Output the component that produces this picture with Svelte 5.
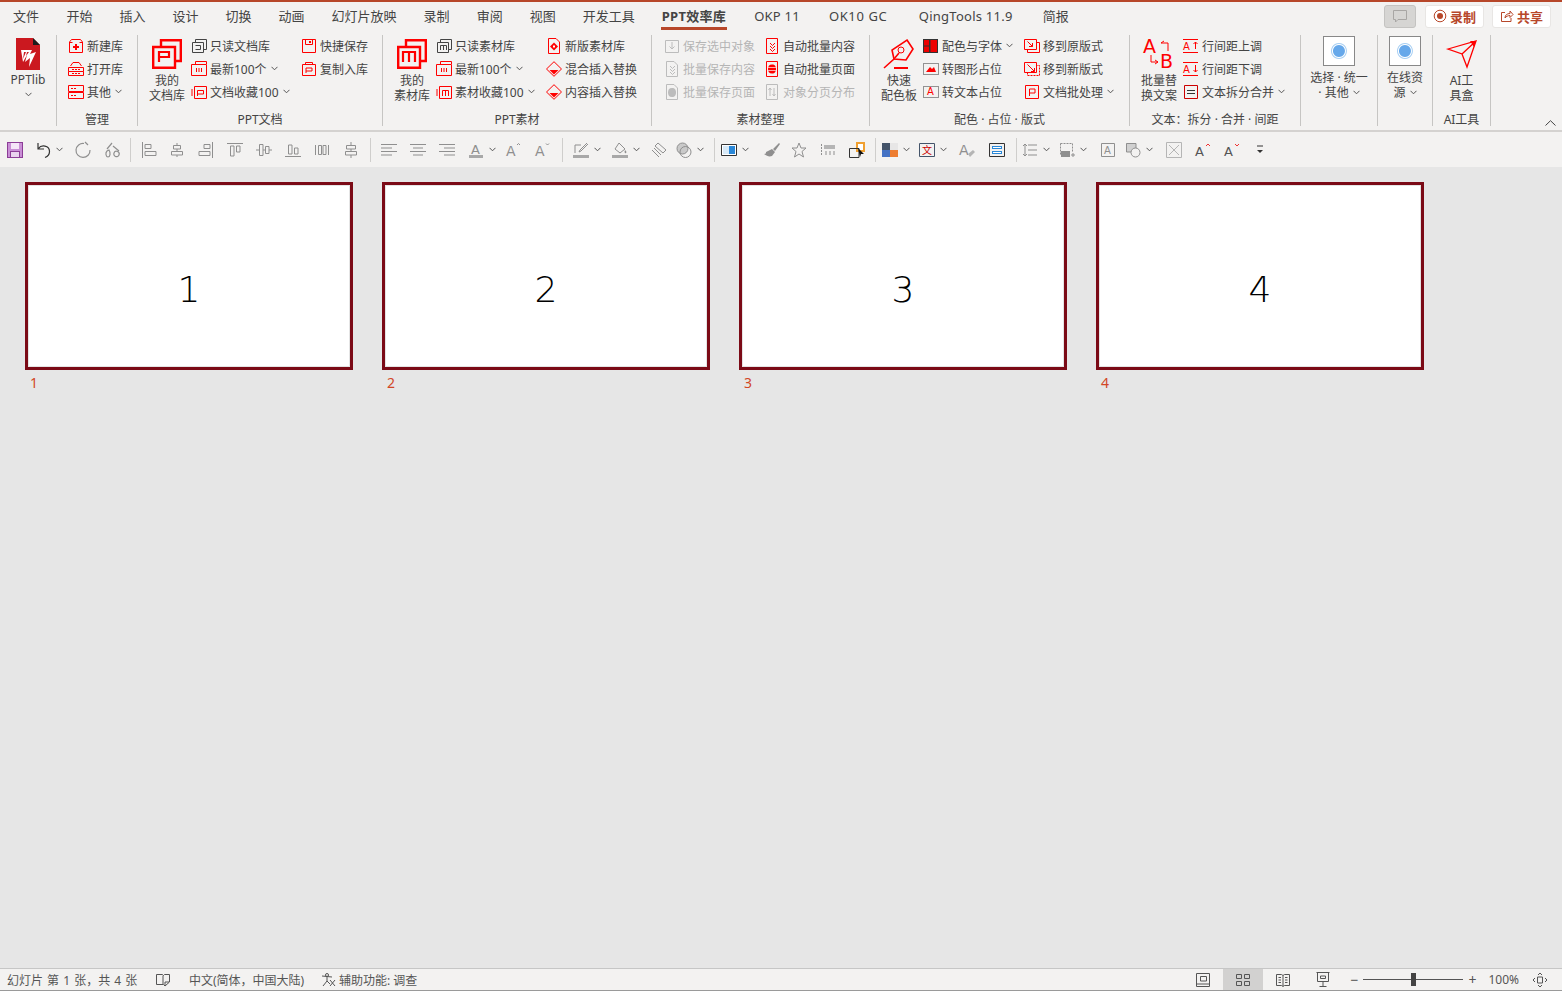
<script>
    const R = '#f00', D = '#444', Gy = '#bcbcbc', Q = '#8f8f8f', K = '#333';

    const s = (d, c = R, w = 1, dash = null) => ({ d, c, w, dash });
    const f = (d, c = R) => ({ d, fill: c });
    const t = (text, x, y, z, c = R, b = 400) => ({ text, x, y, z, c, b });

    const dots = 'M5 7h1v4H5zM7.5 7h1v4h-1zM10 7h1v4h-1z';
    const chev = 'M6 5 8.5 7.5 11 5M6 8 8.5 10.5 11 8M6 11 8.5 13.5 11 11';

    const icons = {
        new: [s('M1.5 4 3.5 1.5H12.5L14.5 4V14.5H1.5Z'), s('M1.5 4.5H4.5M11.5 4.5H14.5'), f('M7 6H9V8H11V10H9V12H7V10H5V8H7Z')],
        open: [s('M2.5 5 5 1.5H11L13.5 5'), s('M.5 6.5H15.5V10.5H.5ZM.5 10.5V14.5H15.5V10.5'), s('M4 8.5H12M4 12.5H12', R, 1, '2 1')],
        other: [s('M.5 1.5H15.5V7.5H.5ZM.5 8.5H15.5V14.5H.5Z'), s('M3 4.5H9M3 11.5H9', R, 1, '2 1')],
        readDoc: [s('M4.5 4V1.5H15.5V11.5H12.5', D), s('M1.5 4.5H12.5V14.5H1.5Z', D), s('M4.5 7.5H9.5V11.5H4.5', D)],
        readMat: [s('M4.5 4V1.5H15.5V11.5H12.5', D), s('M1.5 4.5H12.5V14.5H1.5Z', D), s('M4.5 12V7.5H10.5V12M7.5 7.5V12', D)],
        recent: [s('M4.5 3V.5H15.5V3'), s('M.5 3.5H15.5V14.5H.5Z'), f(dots)],
        favDoc: [s('M3.5 2.5H15.5V14.5H3.5Z'), s('M1 5V12'), s('M6.5 12V6.5H12.5V10H6.5')],
        favMat: [s('M3.5 2.5H15.5V14.5H3.5Z'), s('M1 5V12'), s('M6.5 12V6.5H12.5V12M9.5 6.5V12')],
        quickSave: [s('M1.5 1.5H14.5V14.5H1.5Z'), s('M4.5 2V6.5H11.5V2'), f('M8 3h2v2H8z')],
        copyIn: [s('M1.5 3.5H14.5V14.5H1.5ZM4.5 3V1.5H11.5V3'), s('M5 12V7H11V10H5')],
        newMat: [s('M2.5 .5H10L13.5 4V15.5H2.5Z'), f('M8 4.5 12 8.5 8 12.5 4 8.5Z'), f('M7 7.5h2v2H7z', '#fff')],
        mix: [s('M8 .7 15.5 8 8 15.3.5 8Z'), f('M3.500 9H12.500L8 13.500Z')],
        saveSel: [s('M1.5 2.5H14.5V14.5H1.5Z', Gy), s('M8 4V11M5.5 8.5 8 11 10.5 8.5', Gy)],
        batchSave: [s('M2.5 .5H10L13.5 4V15.5H2.5Z', Gy), s(chev, Gy)],
        batchPage: [s('M2.5 .5H10L13.5 4V15.5H2.5Z', Gy), f('M8 4C11 4 12 6 12 8.5S11 13 8 13 4 11 4 8.5 5 4 8 4Z', Gy)],
        distPage: [s('M2.5 .5H13.5V15.5H2.5Z', Gy), s('M6 4V12M10 4V12M4.5 6 6 4 7.5 6M8.5 10 10 12 11.5 10', Gy)],
        autoContent: [s('M2.5 .5H13.5V15.5H2.5Z'), s(chev)],
        autoPage: [s('M2.5 .5H13.5V15.5H2.5Z'), f('M8 3.5C11 3.5 12 5.5 12 8S11 12.5 8 12.5 4 10.5 4 8 5 3.5 8 3.5Z'), s('M4 6.5H12M4 9.5H12', '#faa')],
        colorFont: [f('M0 1H15V15H0Z', K), f('M1 2H6V7.500H1ZM1 8.500H6V14H1ZM7.500 2H14V14H7.500Z', '#e00')],
        toShape: [s('M.5 2.5H15.5V13.5H.5Z', K, 1, '1 1'), f('M3 11 7 6 9 8 11 6 13 11Z')],
        toText: [s('M.5 2.5H15.5V13.5H.5Z', K, 1, '1 1'), t('A', 4, 11, 10)],
        oldLayout: [s('M.5 1.5H12.5V11.5H.5Z'), s('M3.5 11.5V14.5H15.5V4.5H12.5'), s('M3.5 3.5 8.5 8.5M8.5 5V8.5H5')],
        newLayout: [s('M.5 1.5H12.5V11.5H.5Z'), s('M3.5 11.5V14.5H15.5V4.5H12.5', R, 1, '2 1'), s('M3.5 3.5 10.5 10.5M10.5 7V10.5H7')],
        docBatch: [s('M1.5 1.5H14.5V14.5H1.5Z'), s('M5.5 12V5H11V9H5.5')],
        lineUp: [s('M0 1.5H15M0 14.5H15'), t('A', 0, 12, 10), s('M12.5 11V4M10.5 6 12.5 4 14.5 6')],
        lineDown: [s('M0 1.5H15M0 14.5H15'), t('A', 0, 12, 10), s('M12.5 4V11M10.5 9 12.5 11 14.5 9')],
        split: [s('M1.5 1.5H14.5V14.5H1.5Z', '#c00'), s('M4 6.5H12M4 9.5H12', K)],

        save: [f('M0 0H16V16H0Z', '#8c3d97'), f('M1 1H15V15H1Z', '#c98fd6'), f('M4 1H12V7H4Z', '#f5e6f8'), f('M3 9H13V15H3Z', '#8c3d97'), f('M4 10H12V15H4Z', '#e9d3ee')],
        undo: [s('M3 1V7H9M3.5 6.5C6 2.500 14.500 3 14.500 9.500 14.500 12 12.500 14.500 10 15.500', K, 1.2)],
        redo: [s('M15 8A7 7 0 1 1 9 1.500M10 0 13 3', Q, 1.2)],
        repeat: [s('M3 9C1 11 2 15 4 15S7 11 5 8ZM9 4 15 9M10 11A2.500 2.500 0 1 0 15 13 2.500 2.500 0 0 0 10 11ZM3 7 8 1', Q, 1.2)],
        alL: [s('M1.500 0V16M4 2.500H10V6.500H4ZM4 9.500H15V13.500H4Z', Q)],
        alC: [s('M8 1V3M8 7V9M8 13V15M4.500 3.500H11.500V7H4.500ZM2.500 9.500H13.500V13H2.500Z', Q)],
        alR: [s('M14.500 0V16M6 2.500H12V6.500H6ZM1 9.500H12V13.500H1Z', Q)],
        alT: [s('M0 1.500H16M3.500 4V14H7V4ZM9.500 4V10H13V4Z', Q)],
        alM: [s('M0 8H3M7 8H9M13 8H16M3.500 2.500H7V13.500H3.500ZM9.500 4.500H13V11.500H9.500Z', Q)],
        alB: [s('M0 14.500H16M3.500 12V3H7V12ZM9.500 12V6H13V12Z', Q)],
        dH: [s('M1.500 3V13M14.500 3V13M4.500 3.500H7.500V12.500H4.500ZM9 3.500H12V12.500H9Z', Q)],
        dV: [s('M8 0V3M8 7V9M8 13V16M3.500 3.500H12.500V7H3.500ZM2.500 9.500H13.500V13H2.500Z', Q)],
        tL: [s('M0 2.500H16M0 6H11M0 9.500H16M0 13H11', Q)],
        tC: [s('M0 2.500H16M3 6H13M0 9.500H16M3 13H13', Q)],
        tR: [s('M0 2.500H16M5 6H16M0 9.500H16M5 13H16', Q)],
        fontColor: [t('A', 3, 12, 13, Q), f('M1 13H15V16H1Z', '#a8a8a8')],
        fontUp: [t('A', 0, 14, 14, Q), s('M11 3 12.500 1.500 14 3', Q)],
        fontDown: [t('A', 0, 14, 14, Q), s('M11 1.500 12.500 3 14 1.500', Q)],
        pen: [s('M2 11V3H8M14 1 7 8 6 10 8 9 15 2', Q), f('M0 13H16V16H0Z', '#a8a8a8')],
        fill: [s('M7 1 13 7 8 11 3 7Z', Q), f('M13 8C14 9 15 10 14 11S12 10 13 8Z', Q), f('M0 13H16V16H0Z', '#a8a8a8')],
        eraser: [s('M7 1 15 8 12 11 4 4ZM1 8 8 15M3 6 10 13', Q)],
        merge: [f('M1 6.500A5.500 5.500 0 1 0 12 6.500 5.500 5.500 0 1 0 1 6.500Z', '#c9c9c9'), s('M1 6.500A5.500 5.500 0 1 0 12 6.500 5.500 5.500 0 1 0 1 6.500Z', Q), s('M4 10A5.500 5.500 0 1 0 15 10 5.500 5.500 0 1 0 4 10Z', Q)],
        picker: [s('M.5 2.500H15.500V13.500H.5Z', K), f('M1 3H15V13H1Z', '#fff'), f('M8 4H14V12H8Z', '#2a88d8'), f('M2 4H8V12H2Z', '#d8eaf8')],
        brush: [f('M9 7 15 1 16 2 11 9ZM2 10 8 7 11 10 8 14C5 15 3 14 0 12 2 12 2 11 2 10Z', Q)],
        star: [s('M8 1 10 6H15L11 9.500 12.500 15 8 12 3.500 15 5 9.500 1 6H6Z', Q)],
        guides: [s('M1.500 2V14', Q, 1, '2 1'), f('M4 3H15V7H4Z', '#b5b5b5'), s('M6 9V13M10 9V13M14 9V13', Q)],
        pick: [f('M7 0H16V10H7Z', '#f0a030'), f('M9 2H14V8H9Z', '#fff'), s('M.5 6.500H10V15.500H.5Z', K), f('M9 6 15 12 12 12 11 15Z', '#111')],
        theme: [f('M0 1H8V8H0Z', '#44546a'), f('M8 1H16V8H8Z', '#e7e6e6'), f('M0 8H8V15H0Z', '#4472c4'), f('M8 8H16V15H8Z', '#ed7d31')],
        wen: [s('M.5 1.500H15.500V14.500H.5Z', '#44546a'), t('文', 3, 12, 10, '#c00')],
        fontBrush: [t('A', 0, 13, 14, Q), f('M9 12 14 8 16 10 11 15Z', '#b5b5b5')],
        frame: [s('M.5 1.500H15.500V14.500H.5Z', K), f('M3 4H13V7H3ZM3 9H13V12H3Z', '#2a88d8'), f('M4 5H12V6H4ZM4 10H12V11H4Z', '#fff')],
        lineH: [s('M6 3H15M6 8H15M6 13H15M3 2V14M1 4 3 2 5 4M1 12 3 14 5 12', Q)],
        shot: [s('M1.500 1.500H13.500V10M1.500 1.500V13', Q, 1, '2 1'), f('M2 9H11V15H2Z', Q), s('M14 11V15M12 13H16', Q)],
        textbox: [s('M1.500 1.500H14.500V14.500H1.500Z', Q), t('A', 4, 12, 10, Q)],
        shapes: [f('M1 1H11V10H1Z', '#d0d0d0'), s('M1.500 1.500H11V10H1.500Z', Q), f('M6 10.500A4.500 4.500 0 1 0 15 10.500 4.500 4.500 0 1 0 6 10.500Z', '#f3f2f1'), s('M6 10.500A4.500 4.500 0 1 0 15 10.500 4.500 4.500 0 1 0 6 10.500Z', Q)],
        cross: [s('M.5 .5H15.500V15.500H.5ZM3 3 13 13M13 3 3 13', '#b5b5b5')],
        aUp: [t('A', 0, 14, 13, '#555'), s('M11 4 13 2 15 4', '#e33')],
        aDown: [t('A', 0, 14, 13, '#555'), s('M11 2 13 4 15 2', '#e33')],
        more: [s('M5 4H11', K), f('M5 8H11L8 11Z', K)],
    };

    const large = {
        pptlib: { vb: '0 0 26 32', w: 26, h: 32, p: [f('M1 0H18L25 7V32H1Z', '#cb181f'), f('M18 0 25 7H18Z', '#1c1c1c'), f('M6 12H17L15 16 21 14 14 29 15 20 10 24 12 17 8 24Z', '#fff'), f('M9 14 8 21 11 14ZM12 14 11 18 14 14Z', '#cb181f')] },
        myDoc: { vb: '0 0 30 30', w: 30, h: 30, p: [s('M9 7V1.200H28.800V22H23', R, 2.4), s('M1.200 8H23V28.800H1.200Z', R, 2.4), s('M7 23V13H17V18H7', R, 2.2)] },
        myMat: { vb: '0 0 30 30', w: 30, h: 30, p: [s('M9 7V1.200H28.800V22H23', R, 2.4), s('M1.200 8H23V28.800H1.200Z', R, 2.4), s('M6 23V13H18V23M12 13V23', R, 2.2)] },
        feather: { vb: '0 0 32 30', w: 32, h: 30, p: [s('M24 1 30 10 23 21 11 20 9 11Z', R, 1.6), s('M1 29 11 20 16 14', R, 1.6), s('M18 8A3 3 0 1 1 18 14 3 3 0 1 1 18 8Z', R, 1), s('M11 29H25', R, 2)] },
        ab: { vb: '0 0 32 34', w: 32, h: 34, p: [t('A', 0, 16, 19), t('B', 17, 31, 19), s('M21 4 18 6H25V14M8 18V25H15M12 23 15 25 12 27', R, 1)] },
        send: { vb: '0 0 30 30', w: 30, h: 30, p: [s('M1 10 29 2 20 28 15 15ZM15 15 29 2', R, 1.3), f('M23 2 29 2 27 8Z')] },
        blue: { vb: '0 0 32 30', w: 32, h: 30, p: [f('M0 0H32V30H0Z', '#888'), f('M1 1H31V29H1Z', '#fff'), f('M16 7A8 8 0 1 1 15.900 7Z', '#a9d0f3'), f('M16 8A7 7 0 1 1 15.900 8Z', '#fff'), f('M16 9A6 6 0 1 1 15.900 9Z', '#66a8ea')] },
    };

    const tabs = ['文件', '开始', '插入', '设计', '切换', '动画', '幻灯片放映', '录制', '审阅', '视图', '开发工具', 'PPT效率库', 'OKP 11', 'OK10 GC', 'QingTools 11.9', '简报'];

    const row = (icon, text, more = false, off = false) => ({ icon, text, more, off });

    const groups = [
        { cls: 'g1', big: { icon: 'pptlib', lines: ['PPTlib'], more: true }, cols: [], label: '' },
        { cls: 'g2', cols: [[row('new', '新建库'), row('open', '打开库'), row('other', '其他', true)]], label: '管理' },
        {
            cls: 'g3', big: { icon: 'myDoc', lines: ['我的', '文档库'] },
            cols: [[row('readDoc', '只读文档库'), row('recent', '最新100个', true), row('favDoc', '文档收藏100', true)], [row('quickSave', '快捷保存'), row('copyIn', '复制入库')]],
            label: 'PPT文档'
        },
        {
            cls: 'g4', big: { icon: 'myMat', lines: ['我的', '素材库'] },
            cols: [[row('readMat', '只读素材库'), row('recent', '最新100个', true), row('favMat', '素材收藏100', true)], [row('newMat', '新版素材库'), row('mix', '混合插入替换'), row('mix', '内容插入替换')]],
            label: 'PPT素材'
        },
        {
            cls: 'g5',
            cols: [[row('saveSel', '保存选中对象', false, true), row('batchSave', '批量保存内容', false, true), row('batchPage', '批量保存页面', false, true)], [row('autoContent', '自动批量内容'), row('autoPage', '自动批量页面'), row('distPage', '对象分页分布', false, true)]],
            label: '素材整理'
        },
        {
            cls: 'g6', big: { icon: 'feather', lines: ['快速', '配色板'] },
            cols: [[row('colorFont', '配色与字体', true), row('toShape', '转图形占位'), row('toText', '转文本占位')], [row('oldLayout', '移到原版式'), row('newLayout', '移到新版式'), row('docBatch', '文档批处理', true)]],
            label: '配色 · 占位 · 版式'
        },
        {
            cls: 'g7', big: { icon: 'ab', lines: ['批量替', '换文案'] },
            cols: [[row('lineUp', '行间距上调'), row('lineDown', '行间距下调'), row('split', '文本拆分合并', true)]],
            label: '文本：拆分 · 合并 · 间距'
        },
        { cls: 'g8', big: { icon: 'blue', lines: ['选择 · 统一', '· 其他'], more: 'inline', high: true }, cols: [], label: '' },
        { cls: 'g9', big: { icon: 'blue', lines: ['在线资', '源'], more: 'inline', high: true }, cols: [], label: '' },
        { cls: 'g10', big: { icon: 'send', lines: ['AI工', '具盒'] }, cols: [], label: 'AI工具' },
    ];

    // [icon, has caret, distance to the next item]; separators only carry the distance
    const quick = [
        ['save', 0, 28], ['undo', 1, 40], ['redo', 0, 29], ['repeat', 0, 26], ['|', 0, 11],
        ['alL', 0, 28], ['alC', 0, 29], ['alR', 0, 29], ['alT', 0, 29], ['alM', 0, 29], ['alB', 0, 29], ['dH', 0, 29], ['dV', 0, 27], ['|', 0, 11],
        ['tL', 0, 29], ['tC', 0, 29], ['tR', 0, 29], ['fontColor', 1, 38], ['fontUp', 0, 29], ['fontDown', 0, 27], ['|', 0, 11],
        ['pen', 1, 39], ['fill', 1, 39], ['eraser', 0, 25], ['merge', 1, 38], ['|', 0, 7],
        ['picker', 1, 43], ['brush', 0, 27], ['star', 0, 29], ['guides', 0, 29], ['pick', 0, 26], ['|', 0, 7],
        ['theme', 1, 37], ['wen', 1, 40], ['fontBrush', 0, 30], ['frame', 0, 27], ['|', 0, 6],
        ['lineH', 1, 37], ['shot', 1, 41], ['textbox', 0, 25], ['shapes', 1, 41], ['cross', 0, 29], ['aUp', 0, 29], ['aDown', 0, 28], ['more', 0, 16],
    ];

    const slides = [1, 2, 3, 4];
</script>

{#snippet art(parts, vb, w, h)}
    <svg viewBox={vb} width={w} height={h} class="icon">
        {#each parts as p}
            {#if p.text}
                <text x={p.x} y={p.y} font-size={p.z} fill={p.c} font-weight={p.b} class="glyph">{p.text}</text>
            {:else if p.fill}
                <path d={p.d} fill={p.fill} />
            {:else}
                <path d={p.d} fill="none" stroke={p.c} stroke-width={p.w} stroke-dasharray={p.dash} />
            {/if}
        {/each}
    </svg>
{/snippet}

{#snippet caret()}
    <svg class="caret" width="7" height="5" viewBox="0 0 7 5"><path d="M.5 .8 3.500 3.800 6.500 .8" fill="none" stroke="currentColor" /></svg>
{/snippet}

<div class="app">
    <header class="tabs">
        {#each tabs as tab}
            <span class="tab" class:active={tab === 'PPT效率库'} class:latin={/^[A-Z]/.test(tab) && tab !== 'PPT效率库'} class:gc={tab === 'OK10 GC'} class:qing={tab.startsWith('Qing')}>{tab}</span>
        {/each}
        <div class="actions">
            <button class="comment" aria-label="批注">
                <svg width="16" height="16" viewBox="0 0 16 16"><path d="M1.500 2.500H14.500V11.500H6L3.500 14V11.500H1.500Z" fill="none" stroke="#a8a6a4" /></svg>
            </button>
            <button class="act">
                <svg width="14" height="14" viewBox="0 0 14 14"><circle cx="7" cy="7" r="5.800" fill="none" stroke="#b7472a" /><circle cx="7" cy="7" r="3" fill="#b7472a" /></svg>
                录制
            </button>
            <button class="act">
                <svg width="14" height="14" viewBox="0 0 14 14"><path d="M5 3.500H1.500V12.500H11V9M5 9C5 6 7 4.500 10 4.500V2L13 5.500 10 8.500V6.500C8 6.500 6 7.500 5 9Z" fill="none" stroke="#b7472a" /></svg>
                共享
            </button>
        </div>
    </header>

    <section class="ribbon">
        {#each groups as g}
            <div class="group {g.cls}">
                <div class="cols">
                    {#if g.big}
                        {@const a = large[g.big.icon]}
                        <div class="big" class:high={g.big.high}>
                            <div class="bigicon">
                                {@render art(a.p, a.vb, a.w, a.h)}
                            </div>
                            {#each g.big.lines as line, i}
                                <span class="line">{line}{#if g.big.more === 'inline' && i === g.big.lines.length - 1}{@render caret()}{/if}</span>
                            {/each}
                            {#if g.big.more === true}
                                <span class="line">{@render caret()}</span>
                            {/if}
                        </div>
                    {/if}
                    {#each g.cols as col}
                        <div class="col">
                            {#each col as r}
                                <div class="row" class:off={r.off}>
                                    {@render art(icons[r.icon], '0 0 16 16', 16, 16)}
                                    <span>{r.text}</span>
                                    {#if r.more}{@render caret()}{/if}
                                </div>
                            {/each}
                        </div>
                    {/each}
                </div>
                <div class="label">{g.label}</div>
            </div>
        {/each}
        <svg class="collapse" width="11" height="6" viewBox="0 0 11 6"><path d="M.5 5.500 5.500 .7 10.500 5.500" fill="none" stroke="#444" /></svg>
    </section>

    <nav class="quick">
        {#each quick as q}
            {#if q[0] === '|'}
                <i class="sep" style:width="{q[2]}px"></i>
            {:else}
                <span class="q" style:width="{q[2]}px">
                    {@render art(icons[q[0]], '0 0 16 16', 16, 16)}
                    {#if q[1]}{@render caret()}{/if}
                </span>
            {/if}
        {/each}
    </nav>

    <main class="sorter">
        {#each slides as n}
            <div class="item">
                <div class="slide"><span>{n}</span></div>
                <div class="num">{n}</div>
            </div>
        {/each}
    </main>

    <footer class="status">
        <span class="st first">幻灯片 第 1 张，共 4 张</span>
        <svg class="book" width="16" height="14" viewBox="0 0 16 14"><path d="M1.500 1.500H7.500L8.500 2.500 9.500 1.500H14.500V9L10 13 8.500 11.500H1.500ZM8 2.500V11M10 13V9H14" fill="none" stroke="#555" /></svg>
        <span class="st lang">中文(简体，中国大陆)</span>
        <svg class="person" width="15" height="15" viewBox="0 0 15 15"><path d="M6 1.500A1.500 1.500 0 1 1 6 4.500 1.500 1.500 0 1 1 6 1.500ZM1 4 11 5M6 5V9L2 14M6 9 9 12M9 8 14 14M14 8 9 14" fill="none" stroke="#555" /></svg>
        <span class="st">辅助功能: 调查</span>
        <div class="right">
            <div class="view"><svg width="16" height="14" viewBox="0 0 16 14"><path d="M1.500 .5H14.500V13.500H1.500ZM1.500 11H14.500M5.500 3.500H11.500V8H5.500Z" fill="none" stroke="#555" /></svg></div>
            <div class="view on"><svg width="16" height="14" viewBox="0 0 16 14"><path d="M1.500 1.500H6.500V5.500H1.500ZM9.500 1.500H14.500V5.500H9.500ZM1.500 8.500H6.500V12.500H1.500ZM9.500 8.500H14.500V12.500H9.500Z" fill="none" stroke="#555" /></svg></div>
            <div class="view"><svg width="16" height="14" viewBox="0 0 16 14"><path d="M1.500 1.500H6.500L8 2.500 9.500 1.500H14.500V12.500H9.500L8 13.500 6.500 12.500H1.500ZM8 2.500V13M3.500 4.500H6M3.500 7H6M3.500 9.500H6M10 4.500H12.500M10 7H12.500M10 9.500H12.500" fill="none" stroke="#555" /></svg></div>
            <div class="view"><svg width="16" height="15" viewBox="0 0 16 15"><path d="M1.500 .5H14.500M2.500 .5V9.500H13.500V.5M8 9.500V14.500M4.500 14.500H11.500M5.500 4H10.500V6.500H5.500Z" fill="none" stroke="#555" /></svg></div>
            <div class="zoom">
                <span class="pm">−</span>
                <div class="track"><i></i></div>
                <span class="pm">+</span>
                <span class="pct">100%</span>
                <svg width="16" height="16" viewBox="0 0 16 16"><path d="M5.500 5H10.500V11H5.500ZM6 3 8 1 10 3M6 13 8 15 10 13M3 6 1 8 3 10M13 6 15 8 13 10" fill="none" stroke="#555" /></svg>
            </div>
        </div>
    </footer>
</div>

<style>
    :global(body) {
        margin: 0;
        background: #e6e6e6;
    }

    .app {
        height: 991px;
        width: 1562px;
        display: flex;
        flex-direction: column;
        overflow: hidden;
        font-family: "Noto Sans", "Noto Sans CJK SC", sans-serif;
        font-size: 12px;
        color: #444;
    }

    .tabs {
        height: 28px;
        flex: none;
        display: flex;
        align-items: center;
        border-top: 2px solid #b7472a;
        background: #f3f2f1;
    }

    .tab {
        position: relative;
        padding: 0 13.5px;
        font-size: 13px;
        line-height: 26px;
        white-space: nowrap;
    }

    .tab:first-child {
        padding-left: 13px;
        padding-right: 14px;
    }

    .tab.active {
        font-weight: 700;
        letter-spacing: .3px;
    }

    .tab.latin {
        letter-spacing: .25px;
        padding: 0 14.5px;
    }

    .tab.gc {
        letter-spacing: .6px;
        padding-right: 17px;
    }

    .tab.qing {
        padding-right: 16.5px;
    }

    .tab.active::after {
        content: '';
        position: absolute;
        left: 13px;
        right: 13px;
        bottom: -1px;
        height: 3px;
        background: #b7472a;
    }

    .actions {
        margin-left: auto;
        margin-right: 11px;
        display: flex;
        gap: 8px;
    }

    button {
        height: 23px;
        border-radius: 3px;
        border: 1px solid #e8e6e4;
        background: #fff;
        padding: 0;
        display: flex;
        align-items: center;
        justify-content: center;
        gap: 3px;
        font: inherit;
        font-size: 13px;
        font-weight: 700;
        color: #b7472a;
    }

    .act {
        width: 59px;
    }

    .comment {
        width: 32px;
        margin-right: 1px;
        background: #d6d5d3;
        border-color: #c4c3c1;
    }

    .ribbon {
        position: relative;
        height: 95px;
        flex: none;
        display: flex;
        padding-top: 5px;
        background: #f3f2f1;
        border-bottom: 2px solid #d4d2d0;
    }

    .group {
        height: 91px;
        box-sizing: border-box;
        border-right: 1px solid #c6c5c3;
        display: flex;
        flex-direction: column;
        flex: none;
    }

    .cols {
        height: 77px;
        flex: none;
        display: flex;
        align-items: flex-start;
    }

    .label {
        text-align: center;
        line-height: 15px;
        white-space: nowrap;
    }

    .g1 { width: 57px; }
    .g2 { width: 81px; }
    .g3 { width: 245px; }
    .g4 { width: 269px; }
    .g5 { width: 218px; }
    .g6 { width: 260px; }
    .g7 { width: 171px; }
    .g8 { width: 77px; }
    .g9 { width: 55px; }
    .g10 { width: 58px; }

    .g2 .cols { padding-left: 11px; }
    .g3 .cols, .g4 .cols, .g6 .cols, .g7 .cols { padding-left: 7px; }
    .g5 .cols { padding-left: 12px; }

    .g3 .col:nth-child(2) { width: 110px; }
    .g4 .col:nth-child(2) { width: 110px; }
    .g5 .col:nth-child(1) { width: 100px; }
    .g6 .col:nth-child(2) { width: 101px; }
    .g3 .col:nth-child(2), .g4 .col:nth-child(2), .g6 .col:nth-child(2), .g7 .col { margin-left: 2px; }

    .big {
        width: 44px;
        flex: none;
        display: flex;
        flex-direction: column;
        align-items: center;
    }

    .g1 .big, .g8 .big, .g9 .big, .g10 .big {
        width: 100%;
    }

    .bigicon {
        height: 38px;
        display: flex;
        align-items: center;
        justify-content: center;
    }

    .g1 .bigicon {
        height: 37px;
    }

    .big.high .bigicon {
        height: 35px;
        align-items: flex-start;
    }

    .big.high .icon {
        margin-top: 1px;
    }

    .line {
        min-height: 15px;
        line-height: 15px;
        white-space: nowrap;
        display: flex;
        align-items: center;
        gap: 3px;
    }

    .col {
        flex: none;
        margin-top: -1px;
    }

    .row {
        height: 23px;
        display: flex;
        align-items: center;
        gap: 3px;
        white-space: nowrap;
    }

    .row.off {
        color: #b5b5b5;
    }

    .icon {
        flex: none;
        display: block;
        overflow: visible;
    }

    .glyph {
        font-family: "DejaVu Sans", "Noto Sans CJK SC", sans-serif;
    }

    .caret {
        margin-left: 1px;
        color: #555;
        flex: none;
    }

    .collapse {
        position: absolute;
        right: 6px;
        bottom: 4px;
    }

    .quick {
        height: 35px;
        flex: none;
        display: flex;
        align-items: center;
        background: #f3f2f1;
        padding-left: 7px;
        box-sizing: border-box;
    }

    .q {
        flex: none;
        display: flex;
        align-items: center;
    }

    .q .caret {
        margin-left: 5px;
    }

    .sep {
        height: 24px;
        flex: none;
        box-sizing: border-box;
        border-left: 1px solid #cfcecc;
    }

    .sorter {
        flex: 1;
        display: flex;
        gap: 29px;
        align-items: flex-start;
        padding: 15px 0 0 25px;
        background: #e6e6e6;
    }

    .slide {
        width: 328px;
        height: 188px;
        box-sizing: border-box;
        border: 3px solid #7b0a16;
        background: #fff;
        box-shadow: inset 0 0 0 1px #e4e4e4;
        display: flex;
        align-items: center;
        justify-content: center;
        padding-top: 26px;
        font-family: "DejaVu Sans", sans-serif;
        font-weight: 200;
        font-size: 36px;
        color: #000;
    }

    .num {
        padding-left: 5px;
        font-size: 14px;
        line-height: 26px;
        color: #d24726;
    }

    .status {
        height: 23px;
        flex: none;
        box-sizing: border-box;
        display: flex;
        align-items: center;
        background: #f3f2f1;
        border-top: 1px solid #c6c6c6;
        border-bottom: 1px solid #9a9a9a;
        padding-left: 7px;
        color: #555;
    }

    .st {
        white-space: nowrap;
    }

    .first {
        width: 148px;
        word-spacing: 1px;
    }

    .book {
        margin-right: 18px;
        flex: none;
    }

    .lang {
        width: 132px;
    }

    .person {
        margin-right: 3px;
        flex: none;
    }

    .right {
        margin-left: auto;
        height: 100%;
        display: flex;
        align-items: center;
    }

    .view {
        width: 40px;
        height: 100%;
        display: flex;
        align-items: center;
        justify-content: center;
    }

    .view.on {
        background: #d2d1d0;
    }

    .zoom {
        display: flex;
        align-items: center;
        padding-left: 4px;
        padding-right: 14px;
    }

    .pm {
        width: 14px;
        text-align: center;
        font-size: 14px;
    }

    .track {
        position: relative;
        width: 100px;
        height: 1px;
        background: #555;
        margin: 0 2px;
    }

    .track i {
        position: absolute;
        left: 48px;
        top: -6px;
        width: 5px;
        height: 13px;
        background: #444;
    }

    .pct {
        margin: 0 13px 0 9px;
        font-size: 12px;
    }
</style>
